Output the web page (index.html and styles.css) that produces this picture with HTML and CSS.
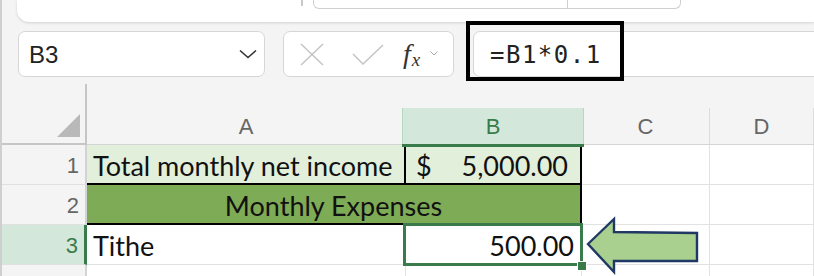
FILE: index.html
```html
<!DOCTYPE html>
<html lang="en">
<head>
    <meta charset="UTF-8">
    <meta name="viewport" content="width=device-width, initial-scale=1.0">
    <title>Budget - Tithe</title>
    <link rel="stylesheet" href="styles.css">
</head>
<body>
    <div class="app">
        <div class="ribbon">
            <div class="ribbon-panel">
                <span class="rb-tick"></span>
                <div class="rb-group">
                    <span class="rb-seg"></span>
                    <span class="rb-seg rb-seg-last"></span>
                </div>
            </div>
        </div>

        <div class="formula-row">
            <div class="name-box">
                <span class="name-text">B3</span>
                <svg class="chev" width="18" height="10" viewBox="0 0 18 10"><path d="M1 1.5 L9 8.5 L17 1.5" fill="none" stroke="#333" stroke-width="1.6"/></svg>
            </div>
            <div class="fx-box">
                <svg class="fx-cancel" width="24" height="23" viewBox="0 0 24 23"><path d="M1 1 L23 22 M23 1 L1 22" stroke="#c4c4c4" stroke-width="1.5" fill="none"/></svg>
                <svg class="fx-ok" width="32" height="21" viewBox="0 0 32 21"><path d="M1 10 L11 20 L31 1" stroke="#c4c4c4" stroke-width="1.5" fill="none"/></svg>
                <span class="fx-label"><i>f</i><sub>x</sub></span>
                <svg class="fx-more" width="8" height="5" viewBox="0 0 8 5"><path d="M0.5 0.5 L4 4 L7.5 0.5" fill="none" stroke="#aaa" stroke-width="1"/></svg>
            </div>
            <div class="formula-input">
                <span class="formula-text">=B1*0.1</span>
                <div class="callout-box"></div>
            </div>
        </div>

        <div class="sheet">
            <div class="corner"><span class="corner-tri"></span></div>
            <div class="col-head"><div class="col-cell">A</div></div>
            <div class="col-head"><div class="col-cell col-active">B</div></div>
            <div class="col-head"><div class="col-cell">C</div></div>
            <div class="col-head"><div class="col-cell">D</div></div>

            <div class="row-head">1</div>
            <div class="cell income-label">Total monthly net income</div>
            <div class="cell income-value"><span>$</span><span>5,000.00</span></div>
            <div class="cell"></div>
            <div class="cell"></div>

            <div class="row-head">2</div>
            <div class="cell section-title">Monthly Expenses</div>
            <div class="cell"></div>
            <div class="cell"></div>

            <div class="row-head row-active">3</div>
            <div class="cell">Tithe</div>
            <div class="cell cell-num cell-selected">500.00<span class="fill-handle"></span></div>
            <div class="cell"></div>
            <div class="cell"></div>

            <div class="row-head"></div>
            <div class="cell"></div>
            <div class="cell"></div>
            <div class="cell"></div>
            <div class="cell"></div>
        </div>

        <svg class="pointer-arrow" width="814" height="276" viewBox="0 0 814 276">
            <polygon points="588,244 614,219 614,232 697,233 697,261 614,261 614,272" fill="#a9d08e" stroke="#1f3864" stroke-width="2.4" stroke-linejoin="miter"/>
        </svg>
    </div>
</body>
</html>
```

FILE: styles.css
```css
body { margin: 0; background: #f4f4f4; font-family: "Liberation Sans", Arial, sans-serif; overflow: hidden; }
.app {
    height: 276px;
    border-left: 2px solid #cfcfcf;
    overflow: hidden;
}

/* ribbon remnant at the top */
.ribbon { height: 22px; }
.ribbon-panel {
    margin-left: 15px;
    height: 22px;
    background: #fff;
    border-bottom-left-radius: 12px;
    box-shadow: 0 1px 3px rgba(0, 0, 0, 0.14);
    display: flex;
    align-items: flex-start;
}
.rb-tick { margin-left: 284px; width: 2px; height: 6px; background: #c8c8c8; }
.rb-group {
    margin-left: 10px;
    width: 366px;
    height: 8px;
    border: 1px solid #d0d0d0;
    border-top: none;
    border-radius: 0 0 6px 6px;
    display: flex;
}
.rb-seg { width: 253px; border-right: 1px solid #d0d0d0; }
.rb-seg-last { border-right: none; flex: 1; }

/* name box + formula bar */
.formula-row { display: flex; margin-top: 9px; height: 46px; }
.name-box {
    margin-left: 16px;
    width: 247px;
    box-sizing: border-box;
    background: #fff;
    border: 1px solid #d6d6d6;
    border-radius: 7px;
    display: flex;
    align-items: center;
    justify-content: space-between;
    padding: 0 7px 0 10px;
}
.name-text { font-size: 24px; color: #222; padding-top: 2px; }
.fx-box {
    margin-left: 18px;
    width: 171px;
    box-sizing: border-box;
    background: #fff;
    border: 1px solid #d6d6d6;
    border-radius: 7px;
    display: flex;
    align-items: center;
    padding-left: 16px;
}
.fx-ok { margin-left: 28px; }
.fx-label {
    margin-left: 19px;
    font-family: "Liberation Serif", serif;
    font-size: 28px;
    color: #333;
    line-height: 1;
}
.fx-label sub { font-size: 19px; font-style: italic; vertical-align: -3px; margin-left: 1px; }
.fx-more { margin-left: 10px; margin-top: -2px; }
.formula-input {
    position: relative;
    margin-left: 19px;
    margin-right: -20px;
    flex: 1;
    background: #fff;
    border: 1px solid #d6d6d6;
    border-radius: 7px;
    display: flex;
    align-items: center;
    padding-left: 16px;
}
.formula-text {
    font-family: "DejaVu Sans Mono", monospace;
    font-size: 24px;
    letter-spacing: 1.5px;
    color: #222;
    padding-top: 2px;
}
.callout-box {
    position: absolute;
    left: -8px;
    top: -11px;
    width: 158px;
    height: 60px;
    box-sizing: border-box;
    border: 4px solid #000;
}

/* worksheet grid */
.sheet {
    margin-top: 7px;
    display: grid;
    grid-template-columns: 85px 319px 176px 128px 1fr;
    grid-template-rows: 61px 40px 40px 40px 40px;
    background: #fff;
}
.corner {
    background: #f4f4f4;
    border-right: 2px solid #c6c6c6;
    border-bottom: 2px solid #c6c6c6;
    position: relative;
}
.corner-tri {
    position: absolute;
    right: 5px;
    bottom: 6px;
    width: 0;
    height: 0;
    border-left: 23px solid transparent;
    border-bottom: 23px solid #b9b9b9;
}
.col-head { background: #f4f4f4; display: flex; align-items: flex-end; border-bottom: 1px solid #d4d4d4; }
.col-cell {
    flex: 1;
    height: 36px;
    box-sizing: border-box;
    border-right: 1px solid #dcdcdc;
    text-align: center;
    font-size: 22px;
    line-height: 38px;
    color: #666;
}
.col-active {
    background: #d3e8da;
    color: #3a7b4c;
    border-right-color: #b5d8c0;
    border-left: 1px solid #b5d8c0;
    box-shadow: 0 3px 0 #3a7b4c;
    margin-left: -4px;
    margin-right: -2px;
    position: relative;
    z-index: 1;
}
.row-head {
    background: #f4f4f4;
    border-right: 2px solid #d3d3d3;
    border-bottom: 1px solid #e0e0e0;
    text-align: right;
    padding-right: 6px;
    font-size: 22px;
    line-height: 42px;
    color: #666;
}
.row-active { background: #d3e8da; color: #3a7b4c; border-right: 3px solid #3a7b4c; }

.cell {
    box-sizing: border-box;
    border-right: 1px solid #e2e2e2;
    border-bottom: 1px solid #e2e2e2;
    font-family: Lato, "Liberation Sans", sans-serif;
    font-size: 27px;
    color: #111;
    padding: 2px 6px 0 6px;
    display: flex;
    align-items: center;
}
.income-label { background: #e2efda; border-right: 2px solid #000; border-bottom: 2px solid #000; }
.income-value {
    background: #e2efda;
    border-right: 2px solid #000;
    border-bottom: 2px solid #000;
    justify-content: space-between;
    padding: 2px 12px 0 10px;
}
.section-title {
    grid-column: span 2;
    background: #7eab55;
    border-right: 2px solid #000;
    border-bottom: 2px solid #000;
    justify-content: center;
}
.cell-num { justify-content: flex-end; padding-right: 7px; }
.cell-selected { position: relative; }
.cell-selected::after {
    content: "";
    position: absolute;
    left: -3px;
    top: -2px;
    right: -2px;
    bottom: -2px;
    border: 3px solid #3a7b4c;
}
.fill-handle {
    position: absolute;
    left: 171px;
    top: 36px;
    width: 8px;
    height: 8px;
    background: #3a7b4c;
    border: 1px solid #fff;
    z-index: 2;
}

.pointer-arrow { position: absolute; left: 0; top: 0; pointer-events: none; }
```
